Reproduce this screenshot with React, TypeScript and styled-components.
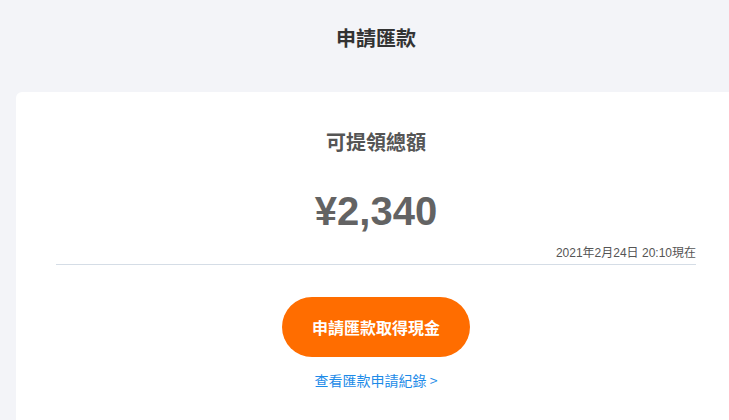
import styled, { createGlobalStyle } from "styled-components";

const GlobalStyle = createGlobalStyle`
  html, body {
    margin: 0;
    padding: 0;
    overflow: hidden;
    background: #f3f4f8;
  }
  body {
    font-family: "Noto Sans CJK TC", "Liberation Sans", sans-serif;
  }
`;

const Page = styled.div`
  width: 752px;
  min-height: 420px;
  background: #f3f4f8;
`;

const Header = styled.h1`
  margin: 0;
  height: 76px;
  line-height: 76px;
  text-align: center;
  font-size: 20px;
  font-weight: 700;
  color: #333333;
`;

const Card = styled.section`
  margin: 16px 16px 0;
  padding: 0 40px 40px;
  background: #ffffff;
  border-radius: 6px;
  display: flex;
  flex-direction: column;
  align-items: center;
`;

const Label = styled.h2`
  margin: 36px 0 0;
  font-size: 20px;
  line-height: 28px;
  font-weight: 700;
  color: #555555;
`;

const Amount = styled.div`
  margin-top: 31px;
  font-family: "Liberation Sans", Arial, sans-serif;
  font-size: 40px;
  line-height: 48px;
  font-weight: 700;
  color: #636363;
`;

const Stamp = styled.div`
  align-self: stretch;
  margin-top: 10px;
  padding-bottom: 3px;
  border-bottom: 1px solid #d5dde6;
  text-align: right;
  font-family: "Liberation Sans", "Noto Sans CJK TC", sans-serif;
  font-size: 12px;
  line-height: 16px;
  color: #555555;
`;

const ActionButton = styled.button`
  margin-top: 32px;
  width: 188px;
  height: 60px;
  border: none;
  border-radius: 30px;
  background: #ff6d00;
  color: #ffffff;
  font-family: inherit;
  font-size: 16px;
  font-weight: 700;
  cursor: pointer;
`;

const HistoryLink = styled.a`
  margin-top: 13px;
  font-size: 14px;
  line-height: 20px;
  color: #1d8be8;
  text-decoration: none;
  cursor: pointer;
`;

const App = () => {
  return (
    <>
      <GlobalStyle />
      <Page>
        <Header>申請匯款</Header>
        <Card>
          <Label>可提領總額</Label>
          <Amount>¥2,340</Amount>
          <Stamp>2021年2月24日 20:10現在</Stamp>
          <ActionButton>申請匯款取得現金</ActionButton>
          <HistoryLink>查看匯款申請紀錄 &gt;</HistoryLink>
        </Card>
      </Page>
    </>
  );
};

export default App;
